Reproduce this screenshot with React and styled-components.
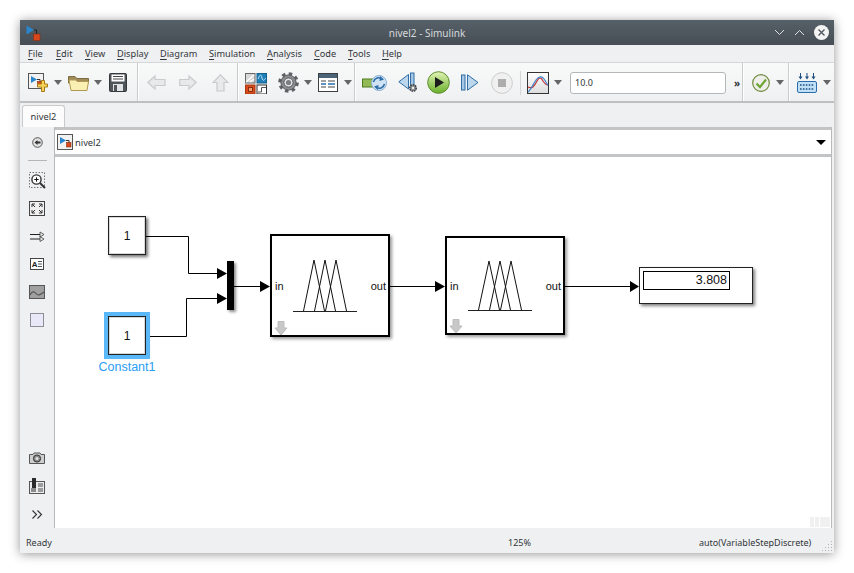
import React from 'react'
import styled, { createGlobalStyle } from 'styled-components'

const GlobalStyle = createGlobalStyle`
  html, body {
    margin: 0;
    padding: 0;
    background: #fff;
  }
  body {
    font-family: "Noto Sans", "Open Sans", sans-serif;
  }
`

const Page = styled.div`
  width: 854px;
  height: 573px;
  padding: 20px 0 0 20px;
  box-sizing: border-box;
  overflow: hidden;
`

const Window = styled.div`
  width: 814px;
  height: 533px;
  display: flex;
  flex-direction: column;
  background: #eff0f1;
  box-shadow: 0 1px 10px rgba(0, 0, 0, 0.42);
`

const TitleBar = styled.div`
  height: 25px;
  flex: none;
  display: flex;
  align-items: center;
  justify-content: space-between;
  position: relative;
  background: linear-gradient(#566068, #474e55);
  color: #d6d9dc;
  font-size: 10px;
`

const TitleText = styled.div`
  position: absolute;
  left: 0;
  right: 0;
  text-align: center;
`

const WindowButtons = styled.div`
  display: flex;
  align-items: center;
  gap: 9px;
  padding-right: 5px;
`

const MenuBar = styled.div`
  height: 17px;
  flex: none;
  display: flex;
  align-items: center;
  padding-left: 8px;
  font-size: 9.2px;
  color: #31363b;
`

const MenuItem = styled.span`
  flex: none;
  width: ${(p) => p.$w}px;
  u {
    text-decoration-thickness: 1px;
    text-underline-offset: 2px;
  }
`

const ToolBar = styled.div`
  height: 41px;
  flex: none;
  display: flex;
  box-sizing: border-box;
  background: linear-gradient(#f8f9f9, #eff0f1);
  border-top: 1px solid #d4d6d8;
  border-bottom: 2px solid #bdbfc1;
`

const ToolGroup = styled.div`
  display: flex;
  align-items: center;
  box-sizing: border-box;
  padding-top: 1px;
  flex: ${(p) => (p.$w ? `none` : 1)};
  width: ${(p) => (p.$w ? `${p.$w}px` : 'auto')};
  border-right: ${(p) => (p.$w ? '1px solid #c9cbcd' : 'none')};
  box-shadow: ${(p) => (p.$w ? '1px 0 0 #fff' : 'none')};
`

const Glyph = styled.svg`
  flex: none;
  display: block;
  margin-left: ${(p) => p.$ml || 0}px;
`

const Caret = styled.span`
  flex: none;
  margin-left: ${(p) => p.$ml || 0}px;
  width: 0;
  height: 0;
  border-left: 4.5px solid transparent;
  border-right: 4.5px solid transparent;
  border-top: 5px solid #666;
`

const ToolDivider = styled.span`
  flex: none;
  width: 1px;
  height: 24px;
  margin-left: 7px;
  background: #d4d6d8;
`

const TimeInput = styled.div`
  flex: none;
  box-sizing: border-box;
  width: 156px;
  height: 22px;
  margin-left: 8px;
  padding-left: 4px;
  display: flex;
  align-items: center;
  background: #fff;
  border: 1px solid #b4b6b8;
  border-radius: 3px;
  font-size: 9px;
  color: #31363b;
`

const MoreMark = styled.span`
  flex: none;
  margin-left: 8px;
  font-size: 10px;
  font-weight: 700;
  color: #31363b;
`

const TabStrip = styled.div`
  height: 24px;
  flex: none;
  display: flex;
  align-items: flex-end;
  padding-left: 2px;
`

const Tab = styled.div`
  width: 43px;
  height: 22px;
  box-sizing: border-box;
  display: flex;
  align-items: center;
  justify-content: center;
  background: #fcfcfc;
  border: 1px solid #c8cacc;
  border-bottom: none;
  border-radius: 3px 3px 0 0;
  font-size: 9.3px;
  color: #31363b;
`

const Body = styled.div`
  flex: 1;
  min-height: 0;
  display: flex;
`

const SideBar = styled.div`
  width: 35px;
  flex: none;
  display: flex;
  flex-direction: column;
  align-items: center;
  padding-top: 1px;
  box-sizing: border-box;
  border-right: 1px solid #b9babb;
`

const SideIcon = styled.div`
  height: 28px;
  width: 100%;
  flex: none;
  display: flex;
  align-items: center;
  justify-content: center;
`

const SideRule = styled.div`
  flex: none;
  width: 19px;
  height: 1px;
  background: #b4b6b8;
  margin: 4px 0 5px;
`

const SideSpacer = styled.div`
  flex: 1;
`

const Main = styled.div`
  flex: 1;
  min-width: 0;
  display: flex;
  flex-direction: column;
  margin-right: 2px;
  border-right: 1px solid #b9babb;
`

const Breadcrumb = styled.div`
  height: 30px;
  flex: none;
  box-sizing: border-box;
  display: flex;
  align-items: center;
  gap: 2px;
  padding: 0 5px 0 2px;
  background: #fff;
  border-top: 3px solid #c3c4c5;
  border-bottom: 3px solid #c3c4c5;
  font-size: 9.3px;
  color: #31363b;
`

const CrumbText = styled.span`
  flex: 1;
`

const CrumbArrow = styled.span`
  width: 0;
  height: 0;
  border-left: 5.5px solid transparent;
  border-right: 5.5px solid transparent;
  border-top: 5px solid #000;
`

const Canvas = styled.div`
  flex: 1;
  position: relative;
  background: #fff;
  overflow: hidden;
  font-family: "Liberation Sans", Arial, sans-serif;
  color: #111;
`

const Wires = styled.svg`
  position: absolute;
  left: 0;
  top: 0;
`

const Node = styled.div`
  position: absolute;
  box-sizing: border-box;
  left: ${(p) => p.$x}px;
  top: ${(p) => p.$y}px;
  width: ${(p) => p.$w}px;
  height: ${(p) => p.$h}px;
`

const ConstantBlock = styled(Node)`
  display: flex;
  align-items: center;
  justify-content: center;
  background: #fff;
  border: 1px solid #222;
  font-size: 12px;
  box-shadow: inset 0 0 0 1px rgba(0, 0, 0, 0.15), 2px 2px 3px rgba(0, 0, 0, 0.55);
  outline: ${(p) => (p.$selected ? '4px solid #5ab8f8' : 'none')};
`

const BlockName = styled(Node)`
  text-align: center;
  font-size: 12.5px;
  line-height: 15px;
  color: #2a9df4;
`

const MuxBar = styled(Node)`
  background: #000;
  box-shadow: 2px 2px 3px rgba(0, 0, 0, 0.45);
`

const FuzzyBlock = styled(Node)`
  display: flex;
  align-items: center;
  justify-content: space-between;
  padding: 0 2px 0 3px;
  background: #fff;
  border: 2px solid #000;
  font-size: 11px;
  box-shadow: 2px 2px 3px rgba(0, 0, 0, 0.4);
`

const MaskArrow = styled.svg`
  position: absolute;
  left: 2px;
  bottom: -1px;
`

const Members = styled.svg`
  position: absolute;
  left: 21px;
  top: ${(p) => p.$top}px;
`

const DisplayBlock = styled(Node)`
  padding: 3px 22px 0 3px;
  background: #fff;
  border: 1px solid #222;
  box-shadow: 2px 2px 3px rgba(0, 0, 0, 0.5);
`

const DisplayValue = styled.div`
  height: 19px;
  box-sizing: border-box;
  border: 1px solid #000;
  padding-right: 2px;
  text-align: right;
  font-size: 12.5px;
  line-height: 17px;
`

const Corner = styled.div`
  position: absolute;
  right: 1px;
  bottom: 1px;
  display: flex;
  gap: 1px;
`

const CornerCell = styled.div`
  width: ${(p) => p.$w}px;
  height: 10px;
  background: #f0f0f0;
`

const StatusBar = styled.div`
  height: 25px;
  flex: none;
  display: flex;
  align-items: center;
  position: relative;
  box-sizing: border-box;
  padding: 3px 0 0 6px;
  font-size: 9px;
  color: #31363b;
`

const StatusCell = styled.span`
  flex: none;
  width: ${(p) => p.$w}px;
`

const Grip = styled.svg`
  position: absolute;
  right: 1px;
  bottom: 2px;
`

const Ico = ({ w, h, ml, children }) => (
  <Glyph $ml={ml} width={w} height={h} viewBox={`0 0 ${w} ${h}`}>
    {children}
  </Glyph>
)

const ModelMark = () => (
  <>
    <rect x="0.5" y="0.5" width="15" height="15" fill="#f2f2f2" stroke="#555" />
    <path d="M3 3 L9 6.5 L3 10 Z" fill="#2a86cc" />
    <path d="M9 6.5 H12 V9" fill="none" stroke="#333" />
    <rect x="9.5" y="8.5" width="4.5" height="4.5" fill="#d8481c" stroke="#8a2c10" strokeWidth="0.6" />
  </>
)

const NewModelIcon = ({ ml }) => (
  <Ico w={20} h={20} ml={ml}>
    <ModelMark />
    <path d="M13.5 7.5 h3 v3.5 h3 v3 h-3 v4.5 h-3 v-4.5 h-4 v-3 h4 Z" fill="#f8d35c" stroke="#a67a12" />
  </Ico>
)

const FolderIcon = ({ ml }) => (
  <Ico w={21} h={16} ml={ml}>
    <path d="M0.5 1.5 H7 L9 3.5 H20.5 V8 H0.5 Z" fill="#a08c5a" stroke="#7d6c40" />
    <path d="M1 5 H8 L9 6.5 H20.5 L19 15.5 H3 Z" fill="#fbf0b4" stroke="#b29a54" />
  </Ico>
)

const SaveIcon = ({ ml }) => (
  <Ico w={18} h={19} ml={ml}>
    <rect x="0.5" y="0.5" width="17" height="18" rx="1" fill="#50555a" stroke="#33373a" />
    <rect x="2.5" y="1.5" width="13" height="7" fill="#fff" />
    <path d="M4 3.5 H14 M4 6 H14" stroke="#444" />
    <rect x="4" y="11" width="10" height="7" fill="#e2e3e4" />
    <rect x="5" y="12" width="3" height="6" fill="#50555a" />
  </Ico>
)

const ArrowIcon = ({ ml, w, h, d }) => (
  <Ico w={w} h={h} ml={ml}>
    <path d={d} fill="#e8e9ea" stroke="#c8cacb" strokeWidth="1.2" />
  </Ico>
)

const LibraryIcon = ({ ml }) => (
  <Ico w={22} h={22} ml={ml}>
    <rect x="0.5" y="1.5" width="9.5" height="9.5" fill="#d8d8d8" stroke="#666" />
    <path d="M1 10 L9 3 M5 10 L9 7" stroke="#fff" strokeWidth="1.4" />
    <rect x="12" y="1.5" width="9.5" height="9.5" fill="#1f80b8" stroke="#14608e" />
    <path d="M13 7 C15 2 16 2 17 6 C18 10 19 8 21 6" fill="none" stroke="#bfe4f6" />
    <rect x="0.5" y="13" width="9.5" height="9" fill="#d84a1a" stroke="#a83610" />
    <rect x="3.5" y="15.5" width="4" height="4" fill="#f2a070" stroke="#8a2c10" />
    <rect x="12" y="13" width="9.5" height="9" fill="#fff" stroke="#333" />
    <path d="M13 20 H16.5 V15.5 H21" fill="none" stroke="#555" />
  </Ico>
)

const GearIcon = ({ ml }) => (
  <Ico w={21} h={21} ml={ml}>
    <circle cx="10.5" cy="10.5" r="8.6" fill="none" stroke="#5f6265" strokeWidth="3.4" strokeDasharray="3.4 3.35" />
    <circle cx="10.5" cy="10.5" r="7.6" fill="#8b8d8f" stroke="#56595c" />
    <circle cx="10.5" cy="10.5" r="4.6" fill="#e2e3e4" stroke="#56595c" />
    <circle cx="10.5" cy="10.5" r="2.6" fill="#7b7d80" />
  </Ico>
)

const TableIcon = ({ ml }) => (
  <Ico w={20} h={19} ml={ml}>
    <rect x="0.5" y="0.5" width="19" height="18" fill="#fff" stroke="#3c4044" />
    <rect x="1" y="1" width="18" height="4" fill="#4c6478" />
    <path d="M3 8 H8 M10 8 H17" stroke="#444" />
    <path d="M3 11 H8 M10 11 H17" stroke="#2a6eb4" strokeWidth="1.4" />
    <path d="M3 14 H8 M10 14 H17" stroke="#444" />
  </Ico>
)

const ConfigIcon = ({ ml }) => (
  <Ico w={25} h={20} ml={ml}>
    <rect x="0.5" y="6" width="11" height="8" fill="#93bb55" stroke="#4f7a22" />
    <circle cx="17" cy="10" r="7.5" fill="#cfe3f5" stroke="#8cb0d2" />
    <path d="M11.5 9 C12.5 5 17 3.5 20 6 M22.5 11 C21.5 15 17 16.5 14 14" fill="none" stroke="#2c6ca8" strokeWidth="1.6" />
    <path d="M18 3 L22 6.5 L17.5 8 Z M16 17 L12 13.5 L16.5 12 Z" fill="#2c6ca8" />
  </Ico>
)

const StepBackIcon = ({ ml }) => (
  <Ico w={20} h={21} ml={ml}>
    <path d="M10.5 2.5 V17 L0.8 9.8 Z" fill="#bcd6ec" stroke="#2f6ea8" />
    <rect x="12.5" y="1" width="3.5" height="13" fill="#a6c8e4" stroke="#2f6ea8" />
    <circle cx="15" cy="16" r="3.2" fill="#8a8d90" stroke="#44474a" strokeWidth="1.6" strokeDasharray="1.6 0.8" />
    <circle cx="15" cy="16" r="1.2" fill="#eee" />
  </Ico>
)

const PlayIcon = ({ ml }) => (
  <Ico w={23} h={23} ml={ml}>
    <defs>
      <linearGradient id="playFill" x1="0" y1="0" x2="0" y2="1">
        <stop offset="0" stopColor="#e2f4b6" />
        <stop offset="1" stopColor="#68b02a" />
      </linearGradient>
    </defs>
    <circle cx="11.5" cy="11.5" r="10.8" fill="url(#playFill)" stroke="#5d8c2e" />
    <path d="M8 6 L17 11.5 L8 17 Z" fill="#1c1c1c" />
  </Ico>
)

const StepForwardIcon = ({ ml }) => (
  <Ico w={18} h={17} ml={ml}>
    <rect x="0.5" y="1" width="3.5" height="15" fill="#a6c8e4" stroke="#2f6ea8" />
    <path d="M6.5 0.8 V16.2 L17 8.5 Z" fill="#bcd6ec" stroke="#2f6ea8" />
  </Ico>
)

const StopIcon = ({ ml }) => (
  <Ico w={22} h={22} ml={ml}>
    <circle cx="11" cy="11" r="10.4" fill="#f0f0f0" stroke="#cdcdcd" />
    <rect x="7" y="7" width="8" height="8" fill="#adadad" />
  </Ico>
)

const ScopeIcon = ({ ml }) => (
  <Ico w={22} h={22} ml={ml}>
    <defs>
      <linearGradient id="scopeFill" x1="0" y1="0" x2="0" y2="1">
        <stop offset="0" stopColor="#fff" />
        <stop offset="1" stopColor="#dcdcdc" />
      </linearGradient>
    </defs>
    <rect x="0.5" y="0.5" width="21" height="21" fill="url(#scopeFill)" stroke="#333" />
    <path d="M1 15 C5 17 7 15 10 9 C12 5 14 5 16 9 C18 12 20 13 21 13" fill="none" stroke="#c03030" strokeWidth="1.2" />
    <path d="M1 20 C4 18 6 12 9 8 C12 4 15 4 17 7 C19 10 20 12 21 13" fill="none" stroke="#3d86c8" strokeWidth="1.2" />
  </Ico>
)

const CheckIcon = ({ ml }) => (
  <Ico w={18} h={18} ml={ml}>
    <circle cx="9" cy="9" r="8.3" fill="#eeeeea" stroke="#6f8b3b" strokeWidth="1.2" />
    <path d="M4.5 9.5 L8 13 L14 5.5" fill="none" stroke="#6ea534" strokeWidth="2.2" />
  </Ico>
)

const KeyboardIcon = ({ ml }) => (
  <Ico w={20} h={20} ml={ml}>
    <path d="M3.5 0 V5 M10 0 V5 M16.5 0 V5" stroke="#1c4f80" />
    <path d="M1.5 3.5 L3.5 6.5 L5.5 3.5 Z M8 3.5 L10 6.5 L12 3.5 Z M14.5 3.5 L16.5 6.5 L18.5 3.5 Z" fill="#1c4f80" />
    <rect x="0.5" y="8.5" width="19" height="11" rx="1.5" fill="#bfe0f6" stroke="#2c6ca8" />
    <path d="M3 12 H17.5 M3 16 H17.5" stroke="#1c4f80" strokeWidth="1.6" strokeDasharray="1.6 1.3" />
  </Ico>
)

const CloseIcon = () => (
  <Ico w={15} h={15}>
    <circle cx="7.5" cy="7.5" r="7.5" fill="#f4f4f4" />
    <path d="M4.5 4.5 L10.5 10.5 M10.5 4.5 L4.5 10.5" stroke="#50585f" strokeWidth="1.4" />
  </Ico>
)

const Chevron = ({ up }) => (
  <Ico w={11} h={7}>
    <path d={up ? 'M1 6 L5.5 1.5 L10 6' : 'M1 1 L5.5 5.5 L10 1'} fill="none" stroke="#dfe2e4" />
  </Ico>
)

const SideBackIcon = () => (
  <Ico w={11} h={11}>
    <circle cx="5.5" cy="5.5" r="4.8" fill="#e4e4e4" stroke="#555" />
    <path d="M2.5 5.5 L5.5 3 V4.6 H8.5 V6.4 H5.5 V8 Z" fill="#333" />
  </Ico>
)

const ZoomIcon = () => (
  <Ico w={17} h={17}>
    <rect x="0.5" y="0.5" width="15" height="15" fill="none" stroke="#777" strokeDasharray="1.5 1.5" />
    <circle cx="7.5" cy="7.5" r="4.6" fill="#fff" stroke="#333" strokeWidth="1.4" />
    <path d="M5.3 7.5 H9.7 M7.5 5.3 V9.7" stroke="#111" />
    <path d="M11 11 L16 16" stroke="#333" strokeWidth="2" />
  </Ico>
)

const FitIcon = () => (
  <Ico w={16} h={15}>
    <rect x="0.5" y="0.5" width="15" height="14" fill="#f0f0f0" stroke="#444" />
    <path d="M3 3 L6 6 M3 3 H6 M3 3 V6 M13 3 L10 6 M13 3 H10 M13 3 V6 M3 12 L6 9 M3 12 H6 M3 12 V9 M13 12 L10 9 M13 12 H10 M13 12 V9" stroke="#333" />
  </Ico>
)

const SignalsIcon = () => (
  <Ico w={15} h={11}>
    <path d="M0 3.5 H10 M0 8 H10" stroke="#222" />
    <path d="M10 1 L14 3.5 L10 6 Z M10 5.5 L14 8 L10 10.5 Z" fill="#e8e8e8" stroke="#444" strokeWidth="0.8" />
  </Ico>
)

const AnnotationIcon = () => (
  <Ico w={14} h={12}>
    <rect x="0.5" y="0.5" width="13" height="11" fill="#fff" stroke="#444" />
    <text x="1.8" y="9" fontSize="8" fontWeight="700" fontFamily="Liberation Sans" fill="#222">A</text>
    <path d="M8 3.5 H12 M8 6 H12 M8 8.5 H12" stroke="#555" />
  </Ico>
)

const ImageIcon = () => (
  <Ico w={16} h={14}>
    <rect x="0.5" y="0.5" width="15" height="13" fill="#a0a0a0" stroke="#555" />
    <path d="M1 10 C3 6 5 6 7 8.5 C9 11 11 10 15 7" fill="none" stroke="#555" strokeWidth="1.2" />
  </Ico>
)

const AreaIcon = () => (
  <Ico w={14} h={14}>
    <rect x="0.5" y="0.5" width="13" height="13" fill="#e8e9f8" stroke="#8d8d96" />
  </Ico>
)

const CameraIcon = () => (
  <Ico w={16} h={12}>
    <path d="M0.5 2.5 H4 L5 1 H11 L12 2.5 H15.5 V11.5 H0.5 Z" fill="#cfcfcf" stroke="#555" />
    <circle cx="8" cy="6.5" r="3.6" fill="#8a8a8a" stroke="#333" />
    <circle cx="8" cy="6.5" r="1.6" fill="#ddd" />
  </Ico>
)

const ExplorerIcon = () => (
  <Ico w={16} h={16}>
    <rect x="0.5" y="3.5" width="15" height="12" fill="#ececec" stroke="#555" />
    <rect x="3" y="0" width="4" height="10" fill="#2b2b2b" />
    <rect x="2" y="10" width="5" height="4" fill="#8c8c8c" />
    <rect x="9" y="5" width="5" height="4" fill="#9c9c9c" />
    <rect x="9" y="10" width="5" height="4" fill="#9c9c9c" />
  </Ico>
)

const MoreIcon = () => (
  <Ico w={11} h={9}>
    <path d="M0.5 0.5 L4.5 4.5 L0.5 8.5 M5.5 0.5 L9.5 4.5 L5.5 8.5" fill="none" stroke="#333" strokeWidth="1.1" />
  </Ico>
)

const Membership = ({ top, height }) => {
  const peaks = [21, 32, 43]
  return (
    <Members $top={top} width={65} height={height + 1}>
      <path d={`M0 ${height + 0.5} H64`} stroke="#222" />
      {peaks.map((x) => (
        <path key={x} d={`M${x - 10.5} ${height} L${x} 0 L${x + 10.5} ${height}`} fill="none" stroke="#111" />
      ))}
    </Members>
  )
}

const Fuzzy = ({ x, y, h, top, height }) => (
  <FuzzyBlock $x={x} $y={y} $w={120} $h={h}>
    <span>in</span>
    <span>out</span>
    <Membership top={top} height={height} />
    <MaskArrow width={14} height={15}>
      <path d="M4 0.5 H10 V7 H13 L7 14 L1 7 H4 Z" fill="#c8c8c8" stroke="#bcbcbc" />
    </MaskArrow>
  </FuzzyBlock>
)

const wirePaths = [
  'M91 79.5 H133.5 V116.5 H163',
  'M91 179.5 H131.5 V141.5 H163',
  'M179 129.5 H206',
  'M335 129.5 H381',
  'M510 129.5 H576',
]

const arrowHeads = [
  'M162 111 L172 116.5 L162 122 Z',
  'M162 136 L172 141.5 L162 147 Z',
  'M205 124 L215 129.5 L205 135 Z',
  'M380 124 L390 129.5 L380 135 Z',
  'M575 124 L584 129.5 L575 135 Z',
]

const menus = [
  ['F', 'ile', 28],
  ['E', 'dit', 29],
  ['V', 'iew', 32],
  ['D', 'isplay', 43],
  ['D', 'iagram', 49],
  ['S', 'imulation', 58],
  ['A', 'nalysis', 47],
  ['C', 'ode', 34],
  ['T', 'ools', 34],
  ['H', 'elp', 30],
]

export default function App() {
  return (
    <Page>
      <GlobalStyle />
      <Window>
        <TitleBar>
          <TitleText>nivel2 - Simulink</TitleText>
          <Ico w={15} h={16} ml={6}>
            <path d="M0.5 0.5 L8 5 L0.5 9.5 Z" fill="#2a86cc" />
            <path d="M8 5 H10.5 V9" fill="none" stroke="#222" />
            <rect x="7.5" y="9" width="6.5" height="6.5" fill="#d8481c" stroke="#8a2c10" strokeWidth="0.6" />
          </Ico>
          <WindowButtons>
            <Chevron />
            <Chevron up />
            <CloseIcon />
          </WindowButtons>
        </TitleBar>

        <MenuBar>
          {menus.map(([key, rest, w], i) => (
            <MenuItem key={i} $w={w}>
              <u>{key}</u>
              {rest}
            </MenuItem>
          ))}
        </MenuBar>

        <ToolBar>
          <ToolGroup $w={118}>
            <NewModelIcon ml={8} />
            <Caret $ml={6} />
            <FolderIcon ml={6} />
            <Caret $ml={5} />
            <SaveIcon ml={7} />
          </ToolGroup>
          <ToolGroup $w={100}>
            <ArrowIcon ml={9} w={19} h={15} d="M0.8 7.5 L8 1 V4.5 H18 V10.5 H8 V14 Z" />
            <ArrowIcon ml={13} w={18} h={15} d="M17.2 7.5 L10 1 V4.5 H0.8 V10.5 H10 V14 Z" />
            <ArrowIcon ml={15} w={17} h={18} d="M8.5 0.8 L16 8.5 H12 V17 H5 V8.5 H1 Z" />
          </ToolGroup>
          <ToolGroup $w={117}>
            <LibraryIcon ml={7} />
            <GearIcon ml={11} />
            <Caret $ml={5} />
            <TableIcon ml={6} />
            <Caret $ml={6} />
          </ToolGroup>
          <ToolGroup $w={388}>
            <ConfigIcon ml={7} />
            <StepBackIcon ml={11} />
            <PlayIcon ml={9} />
            <StepForwardIcon ml={11} />
            <StopIcon ml={12} />
            <ToolDivider />
            <ScopeIcon ml={6} />
            <Caret $ml={5} />
            <TimeInput>10.0</TimeInput>
            <MoreMark>»</MoreMark>
          </ToolGroup>
          <ToolGroup $w={46}>
            <CheckIcon ml={9} />
            <Caret $ml={6} />
          </ToolGroup>
          <ToolGroup>
            <KeyboardIcon ml={8} />
            <Caret $ml={6} />
          </ToolGroup>
        </ToolBar>

        <TabStrip>
          <Tab>nivel2</Tab>
        </TabStrip>

        <Body>
          <SideBar>
            <SideIcon><SideBackIcon /></SideIcon>
            <SideRule />
            <SideIcon><ZoomIcon /></SideIcon>
            <SideIcon><FitIcon /></SideIcon>
            <SideIcon><SignalsIcon /></SideIcon>
            <SideIcon><AnnotationIcon /></SideIcon>
            <SideIcon><ImageIcon /></SideIcon>
            <SideIcon><AreaIcon /></SideIcon>
            <SideSpacer />
            <SideIcon><CameraIcon /></SideIcon>
            <SideIcon><ExplorerIcon /></SideIcon>
            <SideIcon><MoreIcon /></SideIcon>
          </SideBar>
          <Main>
            <Breadcrumb>
              <Ico w={16} h={16}>
                <ModelMark />
              </Ico>
              <CrumbText>nivel2</CrumbText>
              <CrumbArrow />
            </Breadcrumb>
            <Canvas>
              <Wires width={776} height={371}>
                {wirePaths.map((d) => (
                  <path key={d} d={d} fill="none" stroke="#000" />
                ))}
                {arrowHeads.map((d) => (
                  <path key={d} d={d} fill="#000" />
                ))}
              </Wires>
              <ConstantBlock $x={53} $y={59} $w={38} $h={39}>1</ConstantBlock>
              <ConstantBlock $x={53} $y={159} $w={38} $h={39} $selected>1</ConstantBlock>
              <BlockName $x={32} $y={203} $w={80} $h={16}>Constant1</BlockName>
              <MuxBar $x={172} $y={104} $w={7} $h={49} />
              <Fuzzy x={215} y={77} h={103} top={24} height={51} />
              <Fuzzy x={390} y={79} h={99} top={23} height={49} />
              <DisplayBlock $x={584} $y={110} $w={114} $h={37}>
                <DisplayValue>3.808</DisplayValue>
              </DisplayBlock>
              <Corner>
                <CornerCell $w={4} />
                <CornerCell $w={4} />
                <CornerCell $w={10} />
              </Corner>
            </Canvas>
          </Main>
        </Body>

        <StatusBar>
          <StatusCell $w={482}>Ready</StatusCell>
          <StatusCell $w={191}>125%</StatusCell>
          <span>auto(VariableStepDiscrete)</span>
          <Grip width={11} height={11}>
            <path d="M9.5 1 V2 M6.5 4 V5 M9.5 4 V5 M3.5 7 V8 M6.5 7 V8 M9.5 7 V8 M0.5 10 V11 M3.5 10 V11 M6.5 10 V11 M9.5 10 V11" stroke="#b0b2b4" />
          </Grip>
        </StatusBar>
      </Window>
    </Page>
  )
}
